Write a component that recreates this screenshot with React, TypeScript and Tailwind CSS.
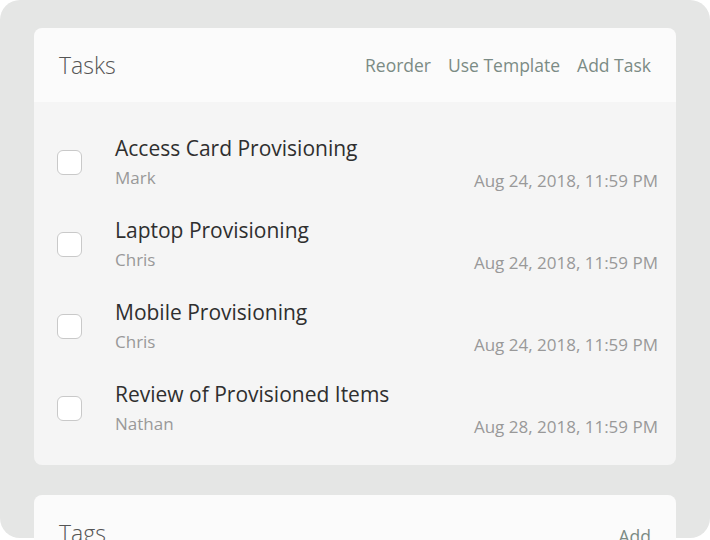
import React from 'react';

interface Task {
  title: string;
  owner: string;
  due: string;
}

const tasks: Task[] = [
  { title: 'Access Card Provisioning', owner: 'Mark', due: 'Aug 24, 2018, 11:59 PM' },
  { title: 'Laptop Provisioning', owner: 'Chris', due: 'Aug 24, 2018, 11:59 PM' },
  { title: 'Mobile Provisioning', owner: 'Chris', due: 'Aug 24, 2018, 11:59 PM' },
  { title: 'Review of Provisioned Items', owner: 'Nathan', due: 'Aug 28, 2018, 11:59 PM' },
];

const TaskRow: React.FC<{ task: Task }> = ({ task }) => (
  <div className="flex items-start h-[82px] pt-[15px] pl-[23px] pr-[18px]">
    <div className="w-[25px] h-[25px] rounded-[6px] border border-[#c9c9c9] bg-white shrink-0 mt-[15px]" />
    <div className="flex-1 min-w-0 ml-[33px]">
      <div className="text-[21px] leading-[26px] text-[#2f2f2f]">{task.title}</div>
      <div className="text-[17px] leading-[22px] text-[#999] mt-[6px]">{task.owner}</div>
    </div>
    <div className="text-[17px] leading-[22px] text-[#999] mt-[35px]">{task.due}</div>
  </div>
);

export default function App() {
  return (
    <div className="w-[710px] h-[540px] bg-white overflow-hidden" style={{ fontFamily: '"Open Sans", "Noto Sans", sans-serif' }}>
      <div className="bg-[#e5e6e5] rounded-[20px] h-[538px] pt-[28px] pl-[34px] pr-[34px]">
        <div className="rounded-[8px] overflow-hidden">
          <div className="bg-[#fbfbfb] h-[74px] flex items-center justify-between pl-[25px] pr-[25px]">
            <span className="text-[23px] font-light text-[#555]">Tasks</span>
            <div className="flex gap-[17px] text-[17.5px] text-[#7b8b85]">
              <span>Reorder</span>
              <span>Use Template</span>
              <span>Add Task</span>
            </div>
          </div>
          <div className="bg-[#f5f5f5] pt-[18px] pb-[17px]">
            {tasks.map((t) => (
              <TaskRow key={t.title} task={t} />
            ))}
          </div>
        </div>
        <div className="mt-[30px] rounded-[8px] bg-[#fbfbfb] h-[80px] flex items-start justify-between pl-[25px] pr-[25px] pt-[21px]">
          <span className="text-[23px] font-light text-[#555]">Tags</span>
          <span className="text-[17.5px] text-[#7b8b85] mt-[7px]">Add</span>
        </div>
      </div>
    </div>
  );
}
